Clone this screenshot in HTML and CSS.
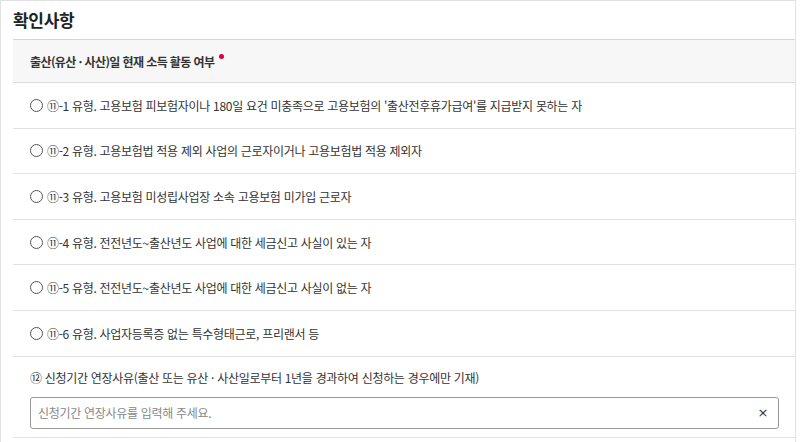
FILE: index.html
```html
<!DOCTYPE html>
<html lang="ko">
<head>
<meta charset="utf-8">
<link rel="stylesheet" href="styles.css">
</head>
<body>
<div class="frame">
  <h2 class="title">확인사항</h2>
  <div class="section">
    <div class="sec-head">출산(유산 · 사산)일 현재 소득 활동 여부<span class="req"></span></div>
    <ul class="options">
      <li class="opt"><span class="radio"></span><span>⑪-1 유형. 고용보험 피보험자이나 180일 요건 미충족으로 고용보험의 '출산전후휴가급여'를 지급받지 못하는 자</span></li>
      <li class="opt"><span class="radio"></span><span>⑪-2 유형. 고용보험법 적용 제외 사업의 근로자이거나 고용보험법 적용 제외자</span></li>
      <li class="opt"><span class="radio"></span><span>⑪-3 유형. 고용보험 미성립사업장 소속 고용보험 미가입 근로자</span></li>
      <li class="opt"><span class="radio"></span><span>⑪-4 유형. 전전년도~출산년도 사업에 대한 세금신고 사실이 있는 자</span></li>
      <li class="opt"><span class="radio"></span><span>⑪-5 유형. 전전년도~출산년도 사업에 대한 세금신고 사실이 없는 자</span></li>
      <li class="opt"><span class="radio"></span><span>⑪-6 유형. 사업자등록증 없는 특수형태근로, 프리랜서 등</span></li>
    </ul>
    <div class="extra">
      <div class="extra-label">⑫ 신청기간 연장사유(출산 또는 유산 · 사산일로부터 1년을 경과하여 신청하는 경우에만 기재)</div>
      <div class="input">
        <span class="ph">신청기간 연장사유를 입력해 주세요.</span>
        <span class="clear">×</span>
      </div>
    </div>
  </div>
</div>
</body>
</html>
```

FILE: styles.css
```css
* { box-sizing: border-box; }
html, body { margin: 0; padding: 0; background: #fff; }
body {
  font-family: "Noto Sans CJK KR", "Noto Sans", sans-serif;
  color: #333;
  width: 800px;
  height: 442px;
  overflow: hidden;
}
.frame {
  width: 796px;
  height: 460px;
  border: 1px solid #e2e2e2;
  border-bottom: none;
  padding: 0 0 0 12px;
}
.title {
  margin: 0;
  height: 38px;
  padding-top: 6px;
  font-size: 17px;
  font-weight: 700;
  color: #222;
  line-height: 26px;
  letter-spacing: -0.3px;
}
.section {
  border-top: 1px solid #d6d6d6;
}
.sec-head {
  height: 43px;
  background: #f7f7f7;
  border-bottom: 1px solid #dcdcdc;
  padding: 0 0 0 17px;
  display: flex;
  align-items: center;
  font-size: 12px;
  font-weight: 700;
  color: #333;
  letter-spacing: -0.6px;
}
.req {
  width: 5px;
  height: 5px;
  background: #e0004d;
  border-radius: 50%;
  margin-left: 5px;
  margin-top: -9px;
}
.options { list-style: none; margin: 0; padding: 0; }
.opt {
  height: 45.6px;
  border-bottom: 1px solid #e2e2e2;
  display: flex;
  align-items: center;
  padding-left: 17px;
  font-size: 12px;
  color: #333;
  letter-spacing: -0.3px;
}
.radio {
  width: 13px;
  height: 13px;
  border: 1px solid #555;
  border-radius: 50%;
  margin-right: 4px;
  flex: none;
}
.extra {
  padding: 11px 16px 8px 17px;
  border-bottom: 1px solid #e2e2e2;
}
.extra-label {
  font-size: 12px;
  letter-spacing: -0.3px;
  line-height: 20px;
  color: #333;
  margin-bottom: 9px;
}
.input {
  height: 32px;
  border: 1px solid #999;
  border-radius: 3px;
  display: flex;
  align-items: center;
  justify-content: space-between;
  padding: 0 10px 0 7px;
  font-size: 12px;
  letter-spacing: -0.3px;
}
.ph { color: #888; }
.clear { color: #333; font-size: 13px; font-family: "DejaVu Sans", sans-serif; }
```
